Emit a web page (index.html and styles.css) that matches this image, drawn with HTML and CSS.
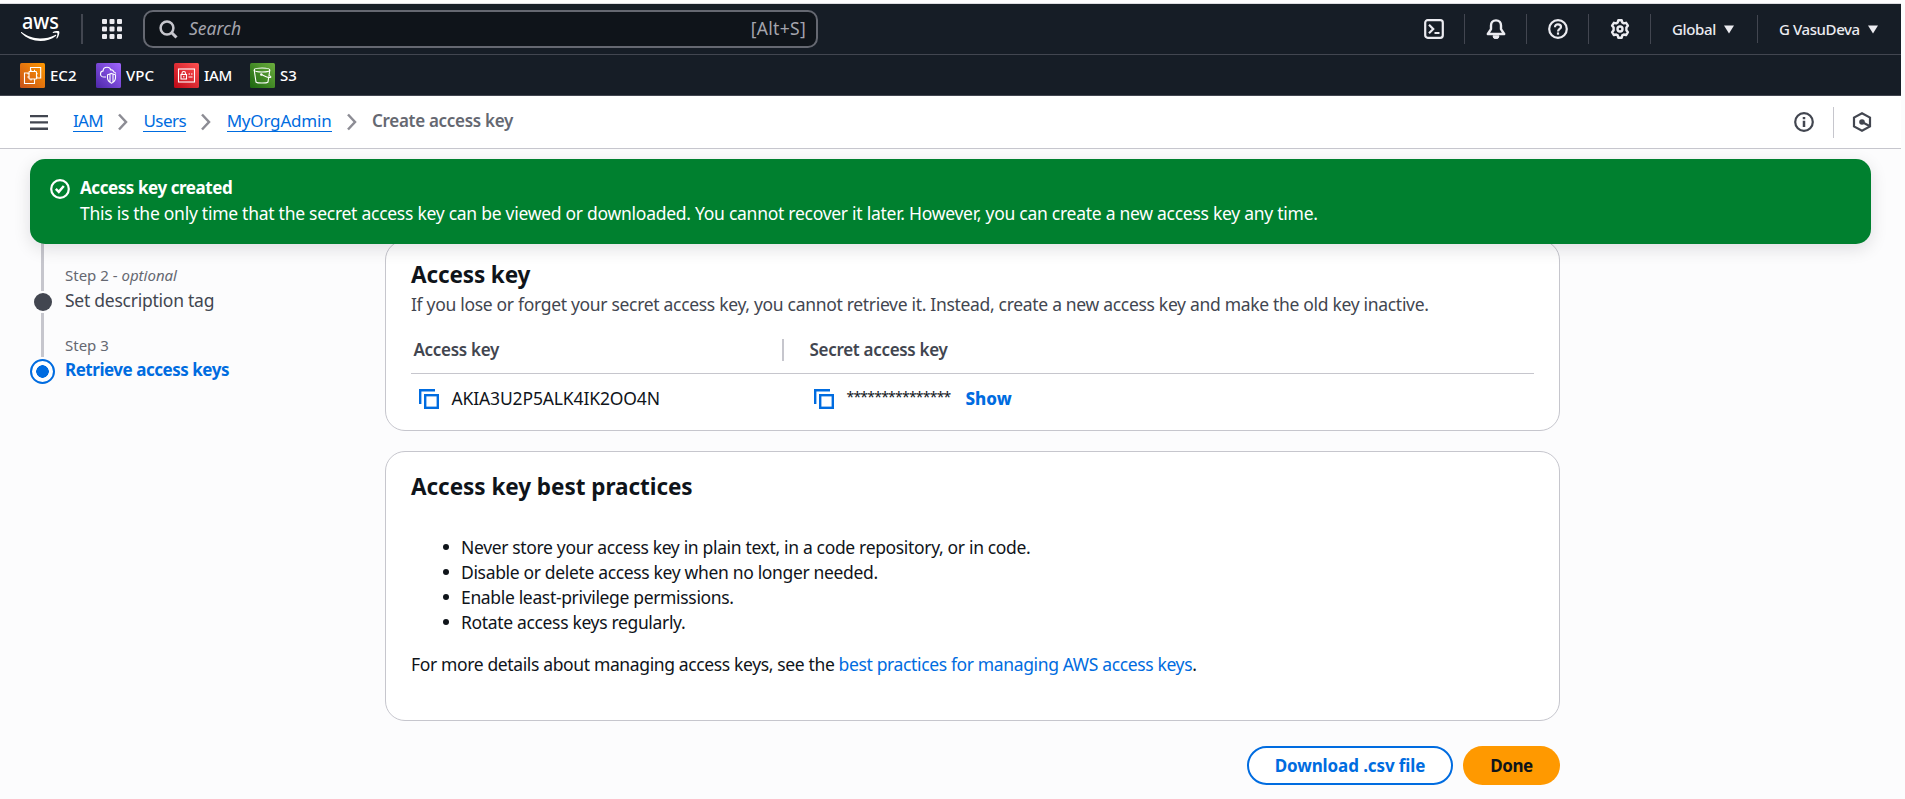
FILE: index.html
```html
<!DOCTYPE html>
<html lang="en">
<head>
<meta charset="utf-8">
<title>Create access key | IAM</title>
<link rel="stylesheet" href="styles.css">
</head>
<body>
<div class="page">
  <header class="topbar">
    <svg class="aws-logo" width="40" height="50" viewBox="0 -11 40 50" fill="#fff">
      <text class="aws-word" x="1" y="14" textLength="37" lengthAdjust="spacingAndGlyphs">aws</text>
      <path d="M.6 17.100c5.400 4.400 12 6.400 18.400 6.400 5.400 0 10.600-1.300 15.200-3.600.9-.4 1.500.5.700 1.100C30.700 24.300 25 26 19.600 26 12.200 26 5.200 23.300.2 18c-.5-.5-.1-1.200.4-.9z"/>
      <path d="M31.800 17.200c2-1.300 5.200-1.300 6.200-.9.900.6.100 4.900-1.900 7.100-.4.400-.9.100-.7-.4.600-1.400 1.400-4 .9-4.900-.5-.6-2.700-.5-4.200-.2-.5.100-.6-.4-.3-.7z"/>
    </svg>
    <i class="bar bar-logo"></i>
    <svg class="apps" width="20" height="20" viewBox="0 0 20 20" fill="#ebebf0">
      <rect width="5" height="5" rx="1"/><rect x="7.500" width="5" height="5" rx="1"/><rect x="15" width="5" height="5" rx="1"/>
      <rect y="7.500" width="5" height="5" rx="1"/><rect x="7.500" y="7.500" width="5" height="5" rx="1"/><rect x="15" y="7.500" width="5" height="5" rx="1"/>
      <rect y="15" width="5" height="5" rx="1"/><rect x="7.500" y="15" width="5" height="5" rx="1"/><rect x="15" y="15" width="5" height="5" rx="1"/>
    </svg>
    <div class="search">
      <svg width="20" height="20" viewBox="0 0 20 20" fill="none" stroke="#c6c6cd" stroke-width="2.500"><circle cx="8" cy="8" r="6.400"/><path d="M12.500 12.500l5 5" stroke-width="3"/></svg>
      <span class="search-hint t">Search</span>
      <span class="search-key t">[Alt+S]</span>
    </div>
    <nav class="tools">
      <span class="tool tool-shell"><svg width="20" height="20" viewBox="0 0 20 20" fill="none" stroke="#ebebf0" stroke-width="2.200"><rect x="1.200" y="1.200" width="17.600" height="17.600" rx="2.500"/><path d="M5 5.800l4.200 4.200L5 14.200M10.500 14h5"/></svg></span>
      <span class="tool"><svg width="20" height="20" viewBox="0 0 20 20" fill="none" stroke="#ebebf0" stroke-width="2.400" stroke-linejoin="round"><path d="M10 1.400c-3.200 0-5 2.300-5 5.200v3.600L1.800 15h16.400L15 10.200V6.600c0-2.900-1.800-5.200-5-5.200z"/><path d="M7 16.800h6a3 3 0 0 1-6 0z" fill="#ebebf0" stroke-width="1"/></svg></span>
      <span class="tool"><svg width="20" height="20" viewBox="0 0 20 20" fill="none" stroke="#ebebf0" stroke-width="2.200"><circle cx="10" cy="10" r="8.800"/><path d="M7 8.200C7 6.400 8.200 5.300 10 5.300s3 1.100 3 2.600c0 1.900-3 2.200-3 4.500"/><path d="M10 13.400v2.300"/></svg></span>
      <span class="tool"><svg width="20" height="20" viewBox="0 0 20 20" fill="none" stroke="#ebebf0" stroke-width="2.400" stroke-linejoin="round"><path d="M8.300 1.200h3.400l.6 2.300 1.500.9 2.300-.6 1.800 2.900-1.500 1.800v2.800l1.500 1.900-1.800 2.900-2.300-.6-1.500.9-.6 2.300H8.300l-.6-2.300-1.500-.9-2.300.6-1.800-2.900 1.500-1.900V8.500L2.100 6.700l1.800-2.900 2.300.6 1.500-.9z"/><circle cx="10" cy="10" r="2.500"/></svg></span>
      <span class="menu menu-region"><span class="t region">Global</span><svg width="10" height="9" viewBox="0 0 10 9" fill="#ebebf0"><path d="M0 .5h10L5 8.500z"/></svg></span>
      <span class="menu menu-user"><span class="t user">G VasuDeva</span><svg width="10" height="9" viewBox="0 0 10 9" fill="#ebebf0"><path d="M0 .5h10L5 8.500z"/></svg></span>
    </nav>
  </header>

  <nav class="favorites">
    <a class="fav fav-ec2"><svg width="25" height="25" viewBox="0 0 25 25"><defs><linearGradient id="g1" x1="0" y1="1" x2="1" y2="0"><stop stop-color="#c8511b"/><stop offset="1" stop-color="#f90"/></linearGradient></defs><rect width="25" height="25" rx="1.500" fill="url(#g1)"/><g fill="none" stroke="#fff" stroke-width="1.100"><rect x="9" y="8.500" width="7.500" height="7.500" rx=".8"/><path d="M10.500 8V4.500h10.200V15H17M8.500 10H4.500v10.500h10V17"/><path d="M11 6.800v2M14.500 6.800v2M11 16v1.600M14.500 16v1.600M7.300 10.800h2M7.300 14h2M16 10.800h1.700M16 14h1.700"/></g></svg><span class="t">EC2</span></a>
    <a class="fav fav-vpc"><svg width="25" height="25" viewBox="0 0 25 25"><defs><linearGradient id="g2" x1="0" y1="1" x2="1" y2="0"><stop stop-color="#4d27a8"/><stop offset="1" stop-color="#a166ff"/></linearGradient></defs><rect width="25" height="25" rx="1.500" fill="url(#g2)"/><g fill="none" stroke="#fff" stroke-width="1.100"><path d="M10 14H8c-2 0-3.500-1.200-3.500-3.100 0-1.700 1.100-2.800 2.600-3C7.200 5.500 9 4.300 11 4.300c2.100 0 3.400 1.200 3.900 2.800 1.300-.6 2.500.3 2.600 1.700 1.100.2 1.900.8 2.300 1.700"/><path d="M15.500 10.400l4 1.400v3c0 2.600-1.500 4.300-4 5.400-2.500-1.100-4-2.800-4-5.400v-3zM14 11v8.200M17 11v8.200"/></g></svg><span class="t">VPC</span></a>
    <a class="fav fav-iam"><svg width="25" height="25" viewBox="0 0 25 25"><defs><linearGradient id="g3" x1="0" y1="1" x2="1" y2="0"><stop stop-color="#bd0816"/><stop offset="1" stop-color="#ff5252"/></linearGradient></defs><rect width="25" height="25" rx="1.500" fill="url(#g3)"/><g fill="none" stroke="#fff" stroke-width="1.100"><rect x="4.500" y="6" width="16" height="13"/><rect x="7" y="11.500" width="5.500" height="4.500"/><path d="M8 11.500v-1.300c0-2.300 3.500-2.300 3.500 0v1.300M9.800 13v1.500M14.500 11h1.500M17 11h1.500M14.500 14h4"/></g></svg><span class="t">IAM</span></a>
    <a class="fav fav-s3"><svg width="25" height="25" viewBox="0 0 25 25"><defs><linearGradient id="g4" x1="0" y1="1" x2="1" y2="0"><stop stop-color="#1b660f"/><stop offset="1" stop-color="#6cae3e"/></linearGradient></defs><rect width="25" height="25" rx="1.500" fill="url(#g4)"/><g fill="none" stroke="#fff" stroke-width="1.100"><ellipse cx="12" cy="7" rx="7.800" ry="2"/><path d="M4.200 7l1.800 12c1.500 1.400 10.500 1.400 12 0l.8-5.500M19.800 7l-.8 5.500M11.500 11.500c2.500 1.500 8.500 4 9.300 2.700.3-.9-1.300-1.400-2.200-1.700"/><circle cx="11.300" cy="11.500" r=".7"/></g></svg><span class="t">S3</span></a>
  </nav>

  <div class="crumbbar">
    <svg class="burger" width="18" height="15" viewBox="0 0 18 15" fill="#424650"><path d="M0 0h18v2.300H0zM0 6.300h18v2.300H0zM0 12.600h18v2.300H0z"/></svg>
    <nav class="crumbs">
      <a class="crumb c-iam t">IAM</a>
      <svg class="chev" width="10" height="18" viewBox="0 0 10 18"><path d="M1 1.500l7 7.500-7 7.500"/></svg>
      <a class="crumb c-users t">Users</a>
      <svg class="chev" width="10" height="18" viewBox="0 0 10 18"><path d="M1 1.500l7 7.500-7 7.500"/></svg>
      <a class="crumb c-admin t">MyOrgAdmin</a>
      <svg class="chev" width="10" height="18" viewBox="0 0 10 18"><path d="M1 1.500l7 7.500-7 7.500"/></svg>
      <span class="crumb-now t">Create access key</span>
    </nav>
    <div class="panel-toggles">
      <svg width="20" height="20" viewBox="0 0 20 20" fill="none" stroke="#424650" stroke-width="2.200"><circle cx="10" cy="10" r="8.800"/><path d="M10 5v2.300M10 8.800V15" stroke-width="2.500"/></svg>
      <i class="panel-bar"></i>
      <svg width="20" height="20" viewBox="0 0 20 20" fill="none" stroke="#424650" stroke-width="2.200"><path d="M18 14.400V5.600L10 1.300 2 5.600v8.800l8 4.300z"/><circle cx="10" cy="10" r="2.800" fill="#424650" stroke="none"/><path d="M10 10l7.500 4"/></svg>
    </div>
  </div>

  <main class="main">
    <section class="flash">
      <svg width="20" height="20" viewBox="0 0 20 20" fill="none" stroke="#fff" stroke-width="2.200"><circle cx="10" cy="10" r="8.800"/><path d="M5.800 9.800l3 3 5-5.800" stroke-width="2.500"/></svg>
      <div>
        <p class="flash-title"><span class="t">Access key created</span></p>
        <p class="flash-text"><span class="t">This is the only time that the secret access key can be viewed or downloaded. You cannot recover it later. However, you can create a new access key any time.</span></p>
      </div>
    </section>

    <aside class="steps">
      <div class="rail"><i class="rail-line"></i><i class="rail-dot"></i><i class="rail-line rail-line-short"></i><i class="rail-current"></i></div>
      <div class="step-list">
        <p class="step-no"><span class="t">Step 2 - <em>optional</em></span></p>
        <p class="step-name"><span class="t">Set description tag</span></p>
        <p class="step-no"><span class="t">Step 3</span></p>
        <p class="step-name step-active"><span class="t">Retrieve access keys</span></p>
      </div>
    </aside>

    <div class="content">
      <section class="card card-key">
        <h2><span class="t">Access key</span></h2>
        <p class="desc"><span class="t">If you lose or forget your secret access key, you cannot retrieve it. Instead, create a new access key and make the old key inactive.</span></p>
        <div class="row row-head">
          <div class="cell cell-first"><span class="t">Access key</span></div>
          <div class="cell"><span class="t th2">Secret access key</span></div>
        </div>
        <div class="row row-data">
          <div class="cell"><svg class="copy" width="20" height="20" viewBox="0 0 20 20" fill="none" stroke="#006ce0" stroke-width="2.400"><path d="M1.200 15V1.200H16"/><rect x="6.200" y="6.200" width="12.600" height="12.600"/></svg><span class="t key-id">AKIA3U2P5ALK4IK2OO4N</span></div>
          <div class="cell"><svg class="copy copy-up" width="20" height="20" viewBox="0 0 20 20" fill="none" stroke="#006ce0" stroke-width="2.400"><path d="M1.200 15V1.200H16"/><rect x="6.200" y="6.200" width="12.600" height="12.600"/></svg><span class="t stars">***************</span><a class="show t">Show</a></div>
        </div>
      </section>

      <section class="card card-best">
        <h2 class="h-best"><span class="t">Access key best practices</span></h2>
        <ul>
          <li><span class="t">Never store your access key in plain text, in a code repository, or in code.</span></li>
          <li><span class="t">Disable or delete access key when no longer needed.</span></li>
          <li><span class="t">Enable least-privilege permissions.</span></li>
          <li><span class="t">Rotate access keys regularly.</span></li>
        </ul>
        <p class="more"><span class="t">For more details about managing access keys, see the</span> <a class="link t">best practices for managing AWS access keys</a>.</p>
      </section>

      <div class="actions">
        <button class="btn btn-csv"><span class="t">Download .csv file</span></button>
        <button class="btn btn-done"><span class="t">Done</span></button>
      </div>
    </div>
  </main>
</div>
</body>
</html>
```
FILE: styles.css
```css
* { box-sizing: border-box; }
body {
  margin: 0;
  padding-top: 3px;
  background: #fcfcfd;
  font-family: "Noto Sans", "Open Sans", sans-serif;
  font-size: 17.5px;
  line-height: 25px;
  color: #0f141a;
}
p, h2, ul { margin: 0; }
i { display: block; flex: none; }
svg { display: block; flex: none; }
.t { white-space: nowrap; }
.page { width: 1901px; height: 796px; display: flex; flex-direction: column; overflow: hidden; border-top: 1px solid #dcdce0; }

.topbar { height: 51px; flex: none; background: #161d26; border-bottom: 1px solid #424650; display: flex; align-items: center; padding-left: 21px; }
.aws-word { font: 500 21.5px "Noto Sans", sans-serif; }
.bar-logo { width: 2px; height: 30px; background: #424650; margin: 0 19px 0 20px; }
.search { width: 675px; height: 38px; margin-left: 21px; border: 2px solid #656871; border-radius: 10px; background: #0f141a; color: #a4a4ad; display: flex; align-items: center; padding: 0 10px 2px 14px; }
.search svg { margin-top: 3px; }
.search-hint { font-style: italic; margin-left: 10px; }
.search-key { margin-left: auto; letter-spacing: .3px; }
.tools { margin-left: auto; display: flex; align-items: center; font-size: 15px; font-weight: 500; color: #ebebf0; }
.tool { width: 62px; height: 30px; display: flex; align-items: center; justify-content: center; border-right: 1px solid #424650; }
.menu { height: 28px; display: flex; align-items: center; gap: 8px; padding: 1px 0 0 21px; }
.menu-region { width: 107px; border-right: 1px solid #424650; letter-spacing: -.35px; }
.menu-user { width: 143px; letter-spacing: -.4px; }

.favorites { height: 41px; flex: none; background: #161d26; border-bottom: 1px solid #424650; display: flex; align-items: center; padding-left: 20px; gap: 20px; color: #fff; font-size: 15px; font-weight: 500; }
.fav { display: flex; align-items: center; gap: 5px; width: 56px; }
.fav-vpc { width: 58px; }
.fav-iam { letter-spacing: -.3px; }

.crumbbar { height: 53px; flex: none; background: #fff; border-bottom: 1px solid #c6c6cd; display: flex; align-items: center; padding-left: 30px; font-size: 17px; }
.crumbs { display: flex; align-items: center; gap: 15.2px; margin-left: 25px; }
.crumb { color: #006ce0; border-bottom: 1px solid #006ce0; line-height: 17px; padding-bottom: 2px; }
.c-iam { letter-spacing: -.67px; }
.c-users { letter-spacing: -.5px; }
.c-admin { letter-spacing: -.18px; }
.crumb-now { color: #656871; font-weight: 600; padding-bottom: 3px; letter-spacing: -.3px; }
.chev { fill: none; stroke: #8c8c94; stroke-width: 2.500; }
.panel-toggles { margin-left: auto; display: flex; align-items: center; padding-right: 29px; }
.panel-bar { width: 1px; height: 31px; background: #c6c6cd; margin: 0 18px 0 19px; }

.main { position: relative; flex: 1; display: flex; padding-left: 30px; }
.flash { position: absolute; z-index: 1; left: 30px; top: 10px; width: 1841px; height: 85px; border-radius: 15px; background: #00802f; color: #fff; display: flex; gap: 10px; padding: 16px 20px; box-shadow: 0 5px 17px rgba(0, 7, 22, .12); }
.flash svg { margin-top: 4px; }
.flash-title { font-size: 17px; font-weight: 700; letter-spacing: -.43px; }
.flash-text { letter-spacing: -.268px; padding-top: 1px; }

.steps { display: flex; gap: 10px; width: 355px; flex: none; padding-top: 81px; }
.rail { width: 25px; display: flex; flex-direction: column; align-items: center; }
.rail-line { width: 3px; height: 61px; background: #c6c6cd; }
.rail-line-short { height: 44px; }
.rail-dot { width: 18px; height: 18px; border-radius: 50%; background: #424650; margin: 2px 0; }
.rail-current { width: 25px; height: 25px; border: 2px solid #006ce0; border-radius: 50%; background: radial-gradient(circle, #006ce0 0 6px, #fff 6.500px); margin-top: 2px; }
.step-list { padding-top: 35px; }
.step-no { font-size: 15px; line-height: 20px; color: #656871; margin-bottom: 2px; }
.step-name { color: #424650; margin-bottom: 22px; padding-top: 1px; letter-spacing: -.25px; }
.step-active { color: #006ce0; font-size: 17px; font-weight: 700; padding-top: 0; letter-spacing: -.47px; }

.content { width: 1175px; padding-top: 91px; }
.card { background: #fff; border: 1px solid #c6c6cd; border-radius: 20px; padding: 20px 25px; }
.card h2 { font-size: 22.5px; line-height: 28px; font-weight: 700; letter-spacing: -.12px; }
.card .h-best { letter-spacing: -.04px; padding-top: 1px; }
.card-key { height: 191px; }
.desc { color: #424650; margin-top: 3px; letter-spacing: -.313px; }
.row { display: grid; grid-template-columns: 373px 1fr; align-items: center; }
.row-head { height: 47px; margin-top: 10px; border-bottom: 1px solid #c6c6cd; color: #424650; font-size: 17px; font-weight: 600; letter-spacing: -.3px; }
.row-head .cell { padding-left: 25.5px; line-height: 23px; }
.row-head .cell-first { padding-left: 2.5px; border-right: 2px solid #c6c6cd; }
.row-head .t { padding-bottom: 1px; line-height: 21px; }
.row-data { height: 48px; }
.cell { display: flex; align-items: center; }
.row-data .cell { padding-left: 8px; }
.row-data .cell + .cell { padding-left: 30px; }
.copy { margin: 2px 12.5px 0 0; }
.copy-up { margin-top: 1px; }
.key-id { letter-spacing: -.14px; }
.stars { font-size: 14px; letter-spacing: -.78px; padding-bottom: 3px; }
.show { color: #006ce0; font-size: 17px; font-weight: 800; margin-left: 15px; }
.card-best { height: 270px; margin-top: 20px; letter-spacing: -.34px; }
.card-best ul { margin-top: 34px; padding: 0 0 0 32px; list-style: none; }
.card-best li { display: flex; align-items: center; gap: 12px; }
.card-best li::before { content: ""; width: 6px; height: 6px; border-radius: 50%; background: #0f141a; margin-bottom: 1px; }
.more { margin-top: 17px; letter-spacing: -.365px; }
.link { color: #006ce0; }

.actions { display: flex; justify-content: flex-end; gap: 10px; margin-top: 25px; }
.btn { font: 700 17px/25px "Noto Sans", sans-serif; height: 39px; border-radius: 20px; padding: 0 0 1px; text-align: center; }
.btn-csv { width: 206px; color: #006ce0; background: #fff; border: 2px solid #006ce0; letter-spacing: -.1px; }
.btn-done { width: 97px; color: #0f141a; background: #f90; border: 0; letter-spacing: -.4px; }
```
